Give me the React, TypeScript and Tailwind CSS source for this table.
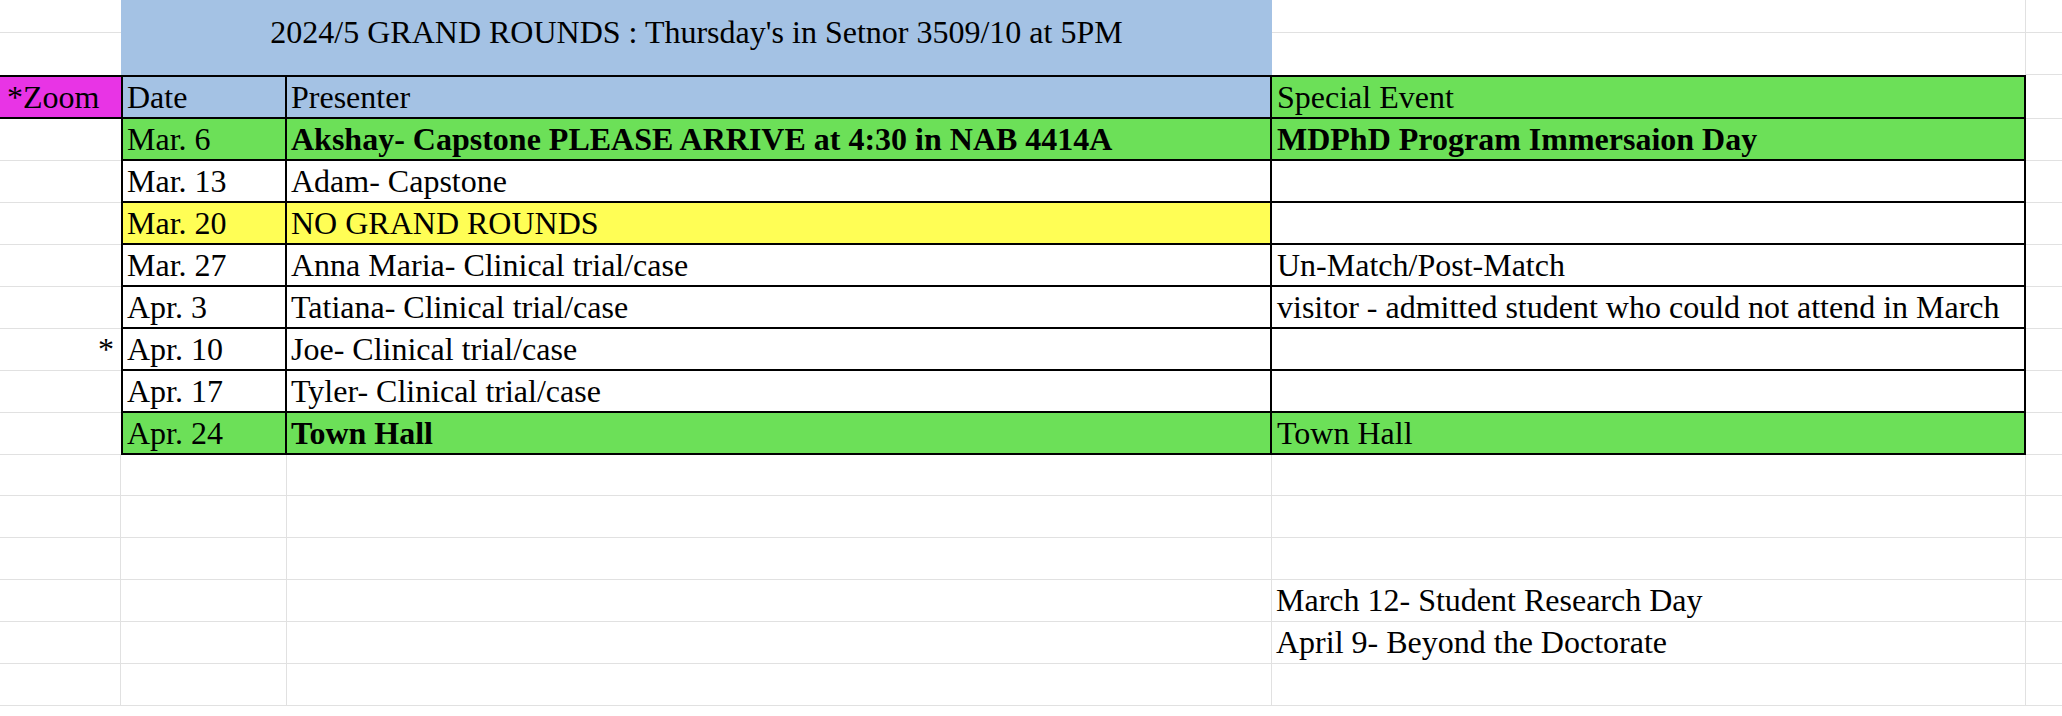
import React from "react";

const grid = "border-[#e1e1e1]";

type Row = {
    mark?: string;
    date: string;
    presenter: string;
    event?: string;
    tone?: "green" | "yellow";
    boldPresenter?: boolean;
    boldEvent?: boolean;
};

const rows: Row[] = [
    { date: "Mar. 6", presenter: "Akshay- Capstone PLEASE ARRIVE at 4:30 in NAB 4414A", event: "MDPhD Program Immersaion Day", tone: "green", boldPresenter: true, boldEvent: true },
    { date: "Mar. 13", presenter: "Adam- Capstone" },
    { date: "Mar. 20", presenter: "NO GRAND ROUNDS", tone: "yellow" },
    { date: "Mar. 27", presenter: "Anna Maria- Clinical trial/case", event: "Un-Match/Post-Match" },
    { date: "Apr. 3", presenter: "Tatiana- Clinical trial/case", event: "visitor - admitted student who could not attend in March" },
    { mark: "*", date: "Apr. 10", presenter: "Joe- Clinical trial/case" },
    { date: "Apr. 17", presenter: "Tyler- Clinical trial/case" },
    { date: "Apr. 24", presenter: "Town Hall", event: "Town Hall", tone: "green", boldPresenter: true },
];

const notes = ["", "", "", "March 12- Student Research Day", "April 9- Beyond the Doctorate", ""];

function toneBg(tone?: string) {
    if (tone === "green") return "bg-[#6ce058]";
    if (tone === "yellow") return "bg-[#fffe55]";
    return "bg-white";
}

export default function App() {
    return <div className="h-[716px] overflow-hidden bg-white font-['Liberation_Serif',serif] text-[32px] leading-[40px] text-black">
        <div className="grid grid-cols-[121px_166px_985px_754px_1fr] grid-rows-[33px_42px_44px_repeat(8,42px)_41px_repeat(5,42px)]">
            {/* title rows */}
            <div className={`border-b ${grid}`}></div>
            <div className="col-span-2 row-span-2 flex justify-center bg-[#a4c2e4] pt-[12px] whitespace-nowrap">
                2024/5 GRAND ROUNDS : Thursday's in Setnor 3509/10 at 5PM
            </div>
            <div className={`border-r border-b ${grid}`}></div>
            <div className={`border-b ${grid}`}></div>
            <div></div>
            <div className={`border-r ${grid}`}></div>
            <div className={`border-b ${grid}`}></div>

            {/* header */}
            <div className="border-y-2 border-black bg-[#e834e5] pl-[7px] whitespace-nowrap">*Zoom</div>
            <div className="border-2 border-black bg-[#a4c2e4] pl-[4px]">Date</div>
            <div className="border-y-2 border-r-2 border-black bg-[#a4c2e4] pl-[4px]">Presenter</div>
            <div className="border-y-2 border-r-2 border-black bg-[#6ce058] pl-[5px]">Special Event</div>
            <div className={`border-b ${grid}`}></div>

            {/* schedule */}
            {rows.map((r) => (
                <React.Fragment key={r.date}>
                    <div className={`border-b ${grid} pr-[7px] text-right`}>{r.mark}</div>
                    <div className={`border-x-2 border-b-2 border-black pl-[4px] whitespace-nowrap ${toneBg(r.tone)}`}>{r.date}</div>
                    <div className={`border-r-2 border-b-2 border-black pl-[4px] whitespace-nowrap ${toneBg(r.tone)} ${r.boldPresenter ? "font-bold" : ""}`}>{r.presenter}</div>
                    <div className={`border-r-2 border-b-2 border-black pl-[5px] whitespace-nowrap ${r.tone === "green" ? "bg-[#6ce058]" : "bg-white"} ${r.boldEvent ? "font-bold" : ""}`}>{r.event}</div>
                    <div className={`border-b ${grid}`}></div>
                </React.Fragment>
            ))}

            {/* empty sheet rows */}
            {notes.map((n, i) => (
                <React.Fragment key={i}>
                    <div className={`border-r border-b ${grid}`}></div>
                    <div className={`border-r border-b ${grid}`}></div>
                    <div className={`border-r border-b ${grid}`}></div>
                    <div className={`border-r border-b ${grid} pl-[4px] whitespace-nowrap`}>{n}</div>
                    <div className={`border-b ${grid}`}></div>
                </React.Fragment>
            ))}
        </div>
    </div>
}
